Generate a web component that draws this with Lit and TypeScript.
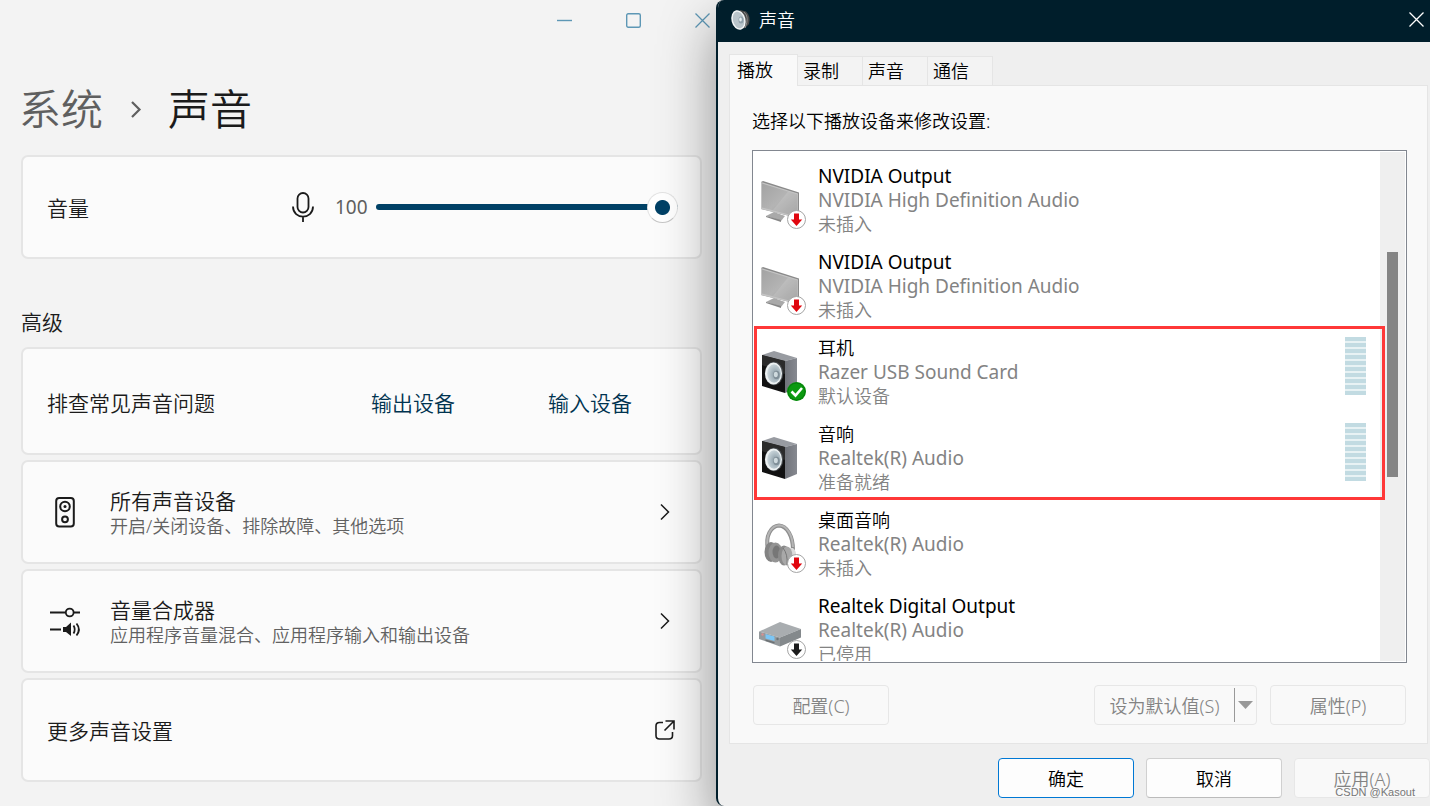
import { LitElement, html, svg, css, nothing } from "lit";
import { customElement, property, state } from "lit/decorators.js";
import { classMap } from "lit/directives/class-map.js";

const base = css`
  *,
  *::before,
  *::after {
    box-sizing: border-box;
  }
  button {
    font: inherit;
    color: inherit;
    background: none;
    border: 0;
    margin: 0;
    padding: 0;
  }
  svg {
    display: block;
    overflow: visible;
  }
`;

/* ---------- device artwork (48 x 50 canvas) ---------- */

const monitor = svg`
  <defs>
    <linearGradient id="scr" x1="0" y1="0" x2="1" y2="1">
      <stop offset="0" stop-color="#a2a2a2" />
      <stop offset="0.5" stop-color="#b4b4b4" />
      <stop offset="1" stop-color="#999" />
    </linearGradient>
  </defs>
  <path d="M7 36 15 32 26 36 22 41Z" fill="#a9a9a9" />
  <path d="M7 36 22 40v2L7 37Z" fill="#868686" />
  <path d="M2 2 4 1 40 12.500v25L39 38 2 29Z" fill="#8a8a8a" />
  <path d="M2 2 39 13.500V38L2 29Z" fill="#c4c4c4" />
  <path d="M3 3.500 38.500 14.500V36.500L3 27.500Z" fill="url(#scr)" />
  <path d="M14 30 29 11.500 38.500 14.500V36.500Z" fill="#fff" opacity="0.12" />
`;

const speaker = svg`
  <defs>
    <linearGradient id="side" x1="0" y1="0" x2="1" y2="0">
      <stop offset="0" stop-color="#70737a" />
      <stop offset="1" stop-color="#868990" />
    </linearGradient>
    <radialGradient id="cone" cx="0.6" cy="0.55" r="0.6">
      <stop offset="0" stop-color="#84929b" />
      <stop offset="0.5" stop-color="#a9b8c0" />
      <stop offset="1" stop-color="#ccd7dc" />
    </radialGradient>
  </defs>
  <path d="M3 3 15-1 38 6 26 9Z" fill="#989ba1" />
  <path d="M26 9 38 6V36L26 41Z" fill="url(#side)" />
  <path d="M3 3 26 9V41L3 34Z" fill="#111" />
  <path d="M3 3 26 9V22L3 13Z" fill="#2b2b2b" />
  <ellipse cx="15" cy="21.500" rx="9.200" ry="11.800" fill="#4a4f53" />
  <ellipse cx="14.500" cy="21.500" rx="8.500" ry="11" fill="#eef2f3" />
  <ellipse cx="15" cy="21.500" rx="6.800" ry="9.200" fill="url(#cone)" />
  <ellipse cx="17.500" cy="23" rx="3.200" ry="4.200" fill="#7f8e97" />
  <ellipse cx="16.800" cy="22.500" rx="2" ry="2.800" fill="#cfdade" />
`;

const headphones = svg`
  <path d="M9 25C6 12 12 2 20 1.500 28 2 34 12 34 26" fill="none" stroke="#8e8e8e" stroke-width="4" />
  <path d="M8.500 22C7 11 12 2 20 1.200 28 1.500 33.500 11 34 23" fill="none" stroke="#b5b5b5" stroke-width="2" />
  <ellipse cx="12" cy="28" rx="6.500" ry="10" fill="#838383" />
  <ellipse cx="16.500" cy="28.500" rx="7" ry="10" fill="#949494" />
  <ellipse cx="17.500" cy="28" rx="4" ry="6.500" fill="#777" />
  <path d="M29 24 34 24Q38 27 37 34L32 41 28 40Z" fill="#dcdcdc" />
  <ellipse cx="25" cy="31.500" rx="6" ry="10" fill="#8b8b8b" />
  <ellipse cx="28" cy="32" rx="5.500" ry="9.500" fill="#a8a8a8" />
  <path d="M24 24Q29 30 28 41" fill="none" stroke="#777" stroke-width="1" />
`;

const amplifier = svg`
  <path d="M0 21.500 21 12 42 19 21 27.500Z" fill="#a9adb0" />
  <path d="M21 27.500 42 19V27.500L21 36.500Z" fill="#84898c" />
  <path d="M0 21.500 21 27.500V36.500L0 29Z" fill="#959a9d" />
  <path d="M6.500 24 15.500 26.500V31L6.500 28.500Z" fill="#7cc6f5" />
  <path d="M6.500 29.500 15.500 32V33.500L6.500 31Z" fill="#6b7073" />
  <circle cx="3.500" cy="24.500" r="1.200" fill="#d98f8f" />
  <circle cx="18.500" cy="29" r="1.200" fill="#6d7376" />
`;

const arrowBadge = (color: string) => svg`
  <circle cx="37.500" cy="39.500" r="9" fill="#fff" stroke="#a5a5a5" stroke-width="1" />
  <path d="M35 33.500h5v6h3.200L37.500 46 31.800 39.500H35Z" fill=${color} />
`;

const badges: Record<string, unknown> = {
  unplugged: arrowBadge("#e0060e"),
  disabled: arrowBadge("#1c1c1c"),
  default: svg`
    <circle cx="37.500" cy="39.500" r="9.500" fill="#0b9a10" />
    <circle cx="37.500" cy="39.500" r="8.500" fill="none" stroke="#077a0b" stroke-width="1" />
    <path d="M32.500 39.500 36.500 43.500 43 36" fill="none" stroke="#fff" stroke-width="2.600" />
  `,
};

const artwork: Record<string, unknown> = { monitor, speaker, headphones, amplifier };

interface Device {
  name: string;
  card: string;
  status: string;
  art: string;
  badge?: string;
  meter?: boolean;
}

const devices: Device[] = [
  { name: "NVIDIA Output", card: "NVIDIA High Definition Audio", status: "未插入", art: "monitor", badge: "unplugged" },
  { name: "NVIDIA Output", card: "NVIDIA High Definition Audio", status: "未插入", art: "monitor", badge: "unplugged" },
  { name: "耳机", card: "Razer USB Sound Card", status: "默认设备", art: "speaker", badge: "default", meter: true },
  { name: "音响", card: "Realtek(R) Audio", status: "准备就绪", art: "speaker", meter: true },
  { name: "桌面音响", card: "Realtek(R) Audio", status: "未插入", art: "headphones", badge: "unplugged" },
  { name: "Realtek Digital Output", card: "Realtek(R) Audio", status: "已停用", art: "amplifier", badge: "disabled" },
];

const isLatin = (text: string) => /^[\x20-\x7e]+$/.test(text);

@customElement("device-row")
class DeviceRow extends LitElement {
  @property({ attribute: false }) device!: Device;

  static styles = [
    base,
    css`
      :host {
        display: flex;
        align-items: flex-start;
        height: 86px;
        padding: 7px 14px 7px 6px;
      }
      .art {
        width: 48px;
        height: 50px;
        margin: 16px 11px 0 0;
        flex: none;
      }
      .text {
        flex: 1;
        min-width: 0;
        line-height: 24px;
        color: #838383;
        white-space: nowrap;
      }
      .name {
        color: #000;
      }
      .latin {
        font-size: 19px;
        font-weight: 400;
      }
      .meter {
        display: grid;
        gap: 2px;
        width: 21px;
        margin-top: 1px;
        background: #e8f2f4;
      }
      .meter i {
        height: 4px;
        background: #c2dbe2;
      }
    `,
  ];

  render() {
    const d = this.device;
    return html`
      <svg class="art" viewBox="0 0 48 50" aria-hidden="true">
        ${artwork[d.art]} ${d.badge ? badges[d.badge] : nothing}
      </svg>
      <div class="text">
        <div class=${classMap({ name: true, latin: isLatin(d.name) })}>${d.name}</div>
        <div class=${classMap({ latin: isLatin(d.card) })}>${d.card}</div>
        <div>${d.status}</div>
      </div>
      ${d.meter ? html`<div class="meter">${Array.from({ length: 10 }, () => html`<i></i>`)}</div>` : nothing}
    `;
  }
}

@customElement("sound-dialog")
class SoundDialog extends LitElement {
  @state() private tab = 0;

  static styles = [
    base,
    css`
      :host {
        display: flex;
        flex-direction: column;
        min-width: 0;
        height: 100vh;
        min-height: 640px;
        border-left: 2px solid #001e2b;
        border-radius: 8px 0 0 8px;
        background: #efefef;
        box-shadow: 0 24px 56px rgba(0, 0, 0, 0.42);
        font-size: 18px;
        color: #000;
        overflow: hidden;
      }
      .titlebar {
        display: flex;
        align-items: center;
        height: 42px;
        flex: none;
        padding: 0 6px 3px 13px;
        background: #001e2b;
        color: #fff;
      }
      .titlebar h2 {
        flex: 1;
        margin: 0 0 0 8px;
        font-size: 18px;
        font-weight: inherit;
        line-height: 24px;
      }
      .body {
        flex: 1;
        min-height: 0;
        display: flex;
        flex-direction: column;
        padding: 12px 2px 0 11px;
      }
      .tabs {
        display: flex;
        align-items: flex-end;
        flex: none;
      }
      .tab {
        height: 29px;
        width: 65px;
        padding: 0 5px;
        text-align: left;
        line-height: 28px;
        background: #f3f3f3;
        border: 1px solid #e5e5e5;
        border-width: 1px 1px 0 0;
      }
      .tab.active {
        height: 32px;
        width: 69px;
        margin-bottom: -1px;
        padding: 0 7px 2px;
        background: #f9f9f9;
        border-left-width: 1px;
        z-index: 1;
      }
      .panel {
        flex: 1;
        min-height: 0;
        display: flex;
        flex-direction: column;
        padding: 23px 20px 18px 22px;
        background: #f9f9f9;
        border: 1px solid #e5e5e5;
      }
      .hint {
        margin: 0 0 17px;
        line-height: 24px;
      }
      .frame {
        position: relative;
        flex: 1;
        min-height: 0;
        display: flex;
        background: #fff;
        border: 1px solid #828790;
      }
      .list {
        flex: 1;
        min-width: 0;
        padding-top: 6px;
        margin-bottom: 1px;
        overflow-y: auto;
        scrollbar-width: none;
      }
      .scroll {
        display: grid;
        grid-template-rows: 100fr 225fr 184fr;
        width: 25px;
        margin: 1px 1px 1px 0;
        padding: 0 7px;
        background: #efefef;
      }
      .thumb {
        grid-row: 2;
        background: #858585;
      }
      .mark {
        position: absolute;
        top: 175px;
        left: 1px;
        right: 21px;
        height: 174px;
        border: 3px solid #ff3838;
        pointer-events: none;
      }
      .row {
        display: flex;
        flex: none;
        gap: 13px;
        margin: 22px 1px 0;
      }
      .push {
        width: 136px;
        height: 40px;
        border: 1px solid #d0d0d0;
        border-bottom-color: #bbb;
        border-radius: 4px;
        background: #fdfdfd;
      }
      .push.primary {
        border-color: #0078d4;
      }
      .push:disabled,
      .split {
        border-color: #e7e7e7;
        background: #f9f9f9;
        color: #838383;
      }
      .spacer {
        flex: 1;
      }
      .split {
        display: flex;
        align-items: center;
        width: 163px;
        height: 40px;
        border: 1px solid #e7e7e7;
        border-radius: 4px;
      }
      .split button {
        color: #838383;
        height: 34px;
      }
      .split .main {
        flex: 1;
        border-right: 1px solid #999;
      }
      .split .more {
        width: 21px;
        padding-left: 3px;
      }
      .footer {
        display: flex;
        justify-content: flex-end;
        flex: none;
        gap: 12px;
        padding: 14px 0 8px;
        margin-right: -2px;
      }
    `,
  ];

  render() {
    return html`
      <header class="titlebar">
        <svg width="20" height="22" viewBox="0 0 20 22" aria-hidden="true">
          <path d="M9 1 15 2.500Q20 7 18 15L14 19 9 20Z" fill="#4a4a4a" />
          <path d="M13 3Q19 8 14 19" fill="none" stroke="#8c8c8c" stroke-width="1" />
          <ellipse cx="7.500" cy="11" rx="7" ry="10" transform="rotate(-14 7.500 11)" fill="#f1f4f5" />
          <ellipse cx="7.500" cy="11" rx="5.500" ry="8.500" transform="rotate(-14 7.500 11)" fill="#b9c4ca" />
          <ellipse cx="10" cy="11" rx="2.500" ry="3.500" fill="#8fa0aa" />
          <ellipse cx="9.500" cy="10.500" rx="1.300" ry="2" fill="#e4ebee" />
        </svg>
        <h2>声音</h2>
        <button aria-label="关闭">
          <svg width="15" height="15" viewBox="0 0 15 15">
            <path d="M0.500 0.500 14.500 14.500M14.500 0.500 0.500 14.500" stroke="#fff" stroke-width="1.300" />
          </svg>
        </button>
      </header>
      <div class="body">
        <div class="tabs" role="tablist">
          ${["播放", "录制", "声音", "通信"].map(
            (t, i) => html`<button
              role="tab"
              aria-selected=${i === this.tab}
              class=${classMap({ tab: true, active: i === this.tab })}
              @click=${() => (this.tab = i)}
            >${t}</button>`
          )}
        </div>
        <section class="panel">
          <p class="hint">选择以下播放设备来修改设置:</p>
          <div class="frame">
            <div class="list">${devices.map((d) => html`<device-row .device=${d}></device-row>`)}</div>
            <div class="scroll"><div class="thumb"></div></div>
            <div class="mark"></div>
          </div>
          <div class="row">
            <button class="push" disabled>配置(C)</button>
            <span class="spacer"></span>
            <div class="split">
              <button class="main" disabled>设为默认值(S)</button>
              <button class="more" disabled aria-label="更多选项">
                <svg width="15" height="8" viewBox="0 0 15 8"><path d="M0 0h15L7.500 8Z" fill="#999" /></svg>
              </button>
            </div>
            <button class="push" disabled>属性(P)</button>
          </div>
        </section>
        <footer class="footer">
          <button class="push primary">确定</button>
          <button class="push">取消</button>
          <button class="push" disabled>应用(A)</button>
        </footer>
      </div>
    `;
  }
}

const chevron = html`<svg width="10" height="16" viewBox="0 0 10 16" aria-hidden="true">
  <path d="M1 0.500 8.500 8 1 15.500" fill="none" stroke="#1b1b1b" stroke-width="1.500" />
</svg>`;

@customElement("settings-pane")
class SettingsPane extends LitElement {
  @state() private volume = 100;

  static styles = [
    base,
    css`
      :host {
        display: block;
        min-width: 0;
        background: #f3f3f3;
        color: #1b1b1b;
        font-size: 21px;
        line-height: 28px;
      }
      .controls {
        display: flex;
        justify-content: flex-end;
        gap: 54px;
        height: 41px;
        padding-right: 6px;
      }
      .crumbs {
        display: flex;
        align-items: center;
        gap: 27px;
        margin: 40px 19px 18px;
        font-size: 42px;
        font-weight: inherit;
        line-height: 56px;
      }
      .crumbs a {
        color: #5f5f5f;
        text-decoration: none;
      }
      .stack {
        display: grid;
        gap: 5px;
        margin: 0 14px 24px 21px;
      }
      .card {
        display: flex;
        align-items: center;
        width: 100%;
        min-height: 104px;
        padding: 0 22px 0 24px;
        text-align: left;
        background: #fbfbfb;
        border: 2px solid #e5e5e5;
        border-radius: 7px;
      }
      .card.tall {
        min-height: 108px;
        padding-top: 2px;
      }
      .grow {
        flex: 1;
        min-width: 0;
        padding-top: 2px;
      }
      h3 {
        margin: 0 21px 11px;
        padding-top: 25px;
        font-size: 21px;
        font-weight: inherit;
      }
      .value {
        width: 41px;
        margin: 0 0 0 21px;
        font-size: 19px;
        font-weight: 400;
        color: #5f5f5f;
      }
      .slider {
        appearance: none;
        -webkit-appearance: none;
        flex: 0 0 302px;
        height: 32px;
        margin: 0;
        background: none;
      }
      .slider::-webkit-slider-runnable-track {
        height: 6px;
        border-radius: 3px;
        background: #004166;
      }
      .slider::-webkit-slider-thumb {
        -webkit-appearance: none;
        width: 31px;
        height: 31px;
        margin-top: -12px;
        border: 1px solid #e3e3e3;
        border-bottom-color: #c6c6c6;
        border-radius: 50%;
        background: radial-gradient(circle, #004166 7px, #fff 8px);
      }
      .links {
        display: flex;
        gap: 93px;
        padding: 2px 46px 0 0;
      }
      .links a {
        color: #003350;
        text-decoration: none;
      }
      .lead {
        width: 32px;
        margin: 0 29px 0 2px;
        flex: none;
      }
      .sub {
        display: block;
        font-size: 18px;
        line-height: 24px;
        color: #616161;
      }
      .title {
        display: block;
        line-height: 26px;
      }
      .end {
        margin-right: 8px;
      }
      .end.wide {
        margin-right: 3px;
      }
    `,
  ];

  render() {
    return html`
      <div class="controls">
        <button aria-label="最小化">
          <svg width="15" height="15" viewBox="0 0 15 15"><path d="M0 7.500h15" stroke="#5d97b5" stroke-width="1.400" /></svg>
        </button>
        <button aria-label="最大化">
          <svg width="15" height="15" viewBox="0 0 15 15">
            <rect x="0.700" y="0.700" width="13.600" height="13.600" rx="1.500" fill="none" stroke="#5d97b5" stroke-width="1.400" />
          </svg>
        </button>
        <button aria-label="关闭">
          <svg width="15" height="15" viewBox="0 0 15 15">
            <path d="M0.500 0.500 14.500 14.500M14.500 0.500 0.500 14.500" stroke="#5d97b5" stroke-width="1.300" />
          </svg>
        </button>
      </div>
      <h1 class="crumbs">
        <a href="#system">系统</a>
        <svg width="11" height="17" viewBox="0 0 11 17" aria-hidden="true">
          <path d="M2 1 9.500 8.500 2 16" fill="none" stroke="#5f5f5f" stroke-width="2.200" />
        </svg>
        <span>声音</span>
      </h1>
      <div class="stack">
        <div class="card">
          <label class="grow" for="volume">音量</label>
          <svg width="22" height="30" viewBox="0 0 22 30" fill="none" stroke="#1b1b1b" stroke-width="1.800" aria-hidden="true">
            <rect x="5.500" y="1" width="11" height="19.500" rx="5.500" />
            <path d="M1 14.500C1 28 21 28 21 14.500M11 24.500V30" />
          </svg>
          <output class="value" for="volume">${this.volume}</output>
          <input
            class="slider"
            id="volume"
            type="range"
            min="0"
            max="100"
            .value=${String(this.volume)}
            @input=${(e: Event) => (this.volume = Number((e.target as HTMLInputElement).value))}
          />
        </div>
      </div>
      <h3>高级</h3>
      <div class="stack">
        <div class="card tall">
          <span class="grow">排查常见声音问题</span>
          <span class="links"><a href="#output">输出设备</a><a href="#input">输入设备</a></span>
        </div>
        <button class="card">
          <svg class="lead" width="32" height="32" viewBox="0 0 32 32" fill="none" stroke="#1b1b1b" stroke-width="2" aria-hidden="true">
            <rect x="7.200" y="2" width="17.600" height="28.500" rx="3" />
            <circle cx="16" cy="10.500" r="4.800" />
            <circle cx="16" cy="10.500" r="1.500" fill="#1b1b1b" stroke="none" />
            <circle cx="16" cy="23.300" r="2.900" />
          </svg>
          <span class="grow">
            <span class="title">所有声音设备</span>
            <span class="sub">开启/关闭设备、排除故障、其他选项</span>
          </span>
          <span class="end">${chevron}</span>
        </button>
        <button class="card">
          <svg class="lead" width="32" height="32" viewBox="0 0 32 32" fill="none" stroke="#1b1b1b" stroke-width="1.800" aria-hidden="true">
            <path d="M1 7.500H16.500M25 7.500H31M1 24.500H12" />
            <circle cx="20.700" cy="7.500" r="3.900" />
            <path d="M14 22h3l5-4.500V31L17 27h-3Z" fill="#1b1b1b" stroke="none" />
            <path d="M24.500 20.500Q27 24.500 24.500 28.500M27.500 18.500Q32.300 24.500 27.500 30.500" />
          </svg>
          <span class="grow">
            <span class="title">音量合成器</span>
            <span class="sub">应用程序音量混合、应用程序输入和输出设备</span>
          </span>
          <span class="end">${chevron}</span>
        </button>
        <button class="card">
          <span class="grow">更多声音设置</span>
          <span class="end wide">
            <svg width="20" height="20" viewBox="0 0 20 20" fill="none" stroke="#1b1b1b" stroke-width="1.600" aria-hidden="true">
              <path d="M8 2.500H4.500Q1 2.500 1 6V15.500Q1 19 4.500 19H14Q17.500 19 17.500 15.500V12M10.500 1H19V9.500M19 1 9.500 10.500" />
            </svg>
          </span>
        </button>
      </div>
    `;
  }
}

@customElement("app-root")
class AppRoot extends LitElement {
  static styles = [
    base,
    css`
      :host {
        position: relative;
        display: grid;
        grid-template-columns: 716fr 714fr;
        min-height: 100vh;
        overflow: hidden;
        background: #f3f3f3;
        font-family: "Noto Sans", "Noto Sans CJK SC", sans-serif;
        font-weight: 350;
      }
      .watermark {
        position: absolute;
        right: 15px;
        bottom: 6px;
        font-family: "Liberation Sans", sans-serif;
        font-size: 11px;
        line-height: 16px;
        color: #777;
      }
    `,
  ];

  render() {
    return html`
      <settings-pane></settings-pane>
      <sound-dialog></sound-dialog>
      <span class="watermark">CSDN @Kasout</span>
    `;
  }
}
